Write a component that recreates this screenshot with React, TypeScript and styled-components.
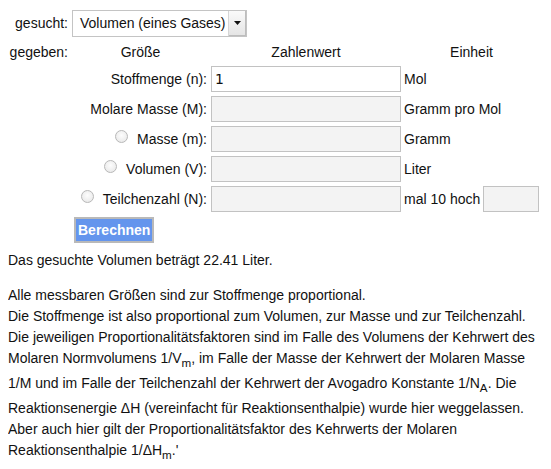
import React from 'react';
import styled, { createGlobalStyle } from 'styled-components';

const GlobalStyle = createGlobalStyle`
    body {
        margin: 8px;
        background: #fff;
        color: #111;
        font-family: "Liberation Sans", Arial, sans-serif;
        font-size: 14px;
    }
`;

const Form = styled.div`
    display: grid;
    grid-template-columns: 62px 137px 190px 78px 57px;
    grid-template-rows: 30px 20px repeat(5, 26px) 28px;
    column-gap: 2px;
    row-gap: 4px;
    align-items: center;
`;

const Caption = styled.div`
    grid-column: 1;
    text-align: right;
    padding-right: 2px;
`;

const Head = styled.div<{ $span?: number }>`
    text-align: center;
    grid-column: span ${(p) => p.$span || 1};
`;

const Label = styled.label`
    grid-column: 2;
    display: flex;
    justify-content: flex-end;
    align-items: center;
    padding-right: 2px;
    white-space: nowrap;
`;

const SelectBox = styled.div`
    grid-column: 2 / span 2;
    justify-self: start;
    display: flex;
    align-items: stretch;
    width: 175px;
    height: 27px;
    box-sizing: border-box;
    border: 1px solid #c4c4c4;
    background: #fff;
`;

const SelectText = styled.div`
    flex: 1;
    display: flex;
    align-items: center;
    padding-left: 7px;
    font-size: 14px;
`;

const SelectArrow = styled.div`
    width: 17px;
    display: flex;
    align-items: center;
    justify-content: center;
    background: linear-gradient(#fafafa, #e4e4e4);
    border-left: 1px solid #d6d6d6;
    box-shadow: inset -1px -1px 0 #bdbdbd;
`;

const Field = styled.input<{ $small?: boolean }>`
    box-sizing: border-box;
    width: ${(p) => (p.$small ? '56px' : '190px')};
    height: 26px;
    margin: 0;
    padding: 0 3px;
    border: 1px solid #c2c2c2;
    background: ${(p) => (p.disabled ? '#f3f3f3' : '#fff')};
    font-family: "DejaVu Sans", sans-serif;
    font-size: 14px;
    color: #111;
    outline: none;
`;

const Unit = styled.div`
    padding-left: 1px;
    white-space: nowrap;
`;

const Radio = styled.span`
    display: inline-block;
    width: 11px;
    height: 11px;
    border-radius: 50%;
    border: 1px solid #b8b8b8;
    background: radial-gradient(circle at 50% 40%, #fdfdfd 0%, #ececec 70%, #dcdcdc 100%);
    margin-right: 9px;
    position: relative;
    top: -3px;
`;

const Button = styled.button`
    grid-column: 2;
    justify-self: start;
    margin-left: 2px;
    height: 26px;
    padding: 0 2px;
    border: 2px solid #b9b9b9;
    background: #6495ed;
    color: #fff;
    font-family: "Liberation Sans", Arial, sans-serif;
    font-weight: bold;
    font-size: 14px;
`;

const Result = styled.p`
    margin: 6px 0 0;
    line-height: 21px;
`;

const Info = styled.p`
    margin: 14px 0 0;
    line-height: 21px;
`;

const rows = [
    { label: 'Stoffmenge (n):', unit: 'Mol', value: '1', radio: false, active: true },
    { label: 'Molare Masse (M):', unit: 'Gramm pro Mol', value: '', radio: false, active: false },
    { label: 'Masse (m):', unit: 'Gramm', value: '', radio: true, active: false },
    { label: 'Volumen (V):', unit: 'Liter', value: '', radio: true, active: false },
    { label: 'Teilchenzahl (N):', unit: 'mal 10 hoch', value: '', radio: true, active: false },
];

export default function App() {
    return (
        <>
            <GlobalStyle />
            <Form>
                <Caption>gesucht:</Caption>
                <SelectBox>
                    <SelectText>Volumen (eines Gases)</SelectText>
                    <SelectArrow>
                        <svg width="7" height="4" viewBox="0 0 7 4">
                            <path d="M0 0h7L3.5 4z" fill="#111" />
                        </svg>
                    </SelectArrow>
                </SelectBox>

                <Caption>gegeben:</Caption>
                <Head>Größe</Head>
                <Head>Zahlenwert</Head>
                <Head $span={2}>Einheit</Head>

                {rows.map((r) => (
                    <React.Fragment key={r.label}>
                        <Label>
                            {r.radio && <Radio />}
                            {r.label}
                        </Label>
                        <Field defaultValue={r.value} disabled={!r.active} />
                        <Unit>{r.unit}</Unit>
                        {r.unit === 'mal 10 hoch' && <Field $small disabled />}
                    </React.Fragment>
                ))}

                <Button>Berechnen</Button>
            </Form>

            <Result>Das gesuchte Volumen beträgt 22.41 Liter.</Result>

            <Info>
                Alle messbaren Größen sind zur Stoffmenge proportional.
                <br />
                Die Stoffmenge ist also proportional zum Volumen, zur Masse und zur Teilchenzahl.
                <br />
                Die jeweiligen Proportionalitätsfaktoren sind im Falle des Volumens der Kehrwert des
                Molaren Normvolumens 1/V<sub>m</sub>, im Falle der Masse der Kehrwert der Molaren Masse
                1/M und im Falle der Teilchenzahl der Kehrwert der Avogadro Konstante 1/N<sub>A</sub>. Die
                Reaktionsenergie ΔH (vereinfacht für Reaktionsenthalpie) wurde hier weggelassen.
                <br />
                Aber auch hier gilt der Proportionalitätsfaktor des Kehrwerts der Molaren
                Reaktionsenthalpie 1/ΔH<sub>m</sub>.'
            </Info>
        </>
    );
}
